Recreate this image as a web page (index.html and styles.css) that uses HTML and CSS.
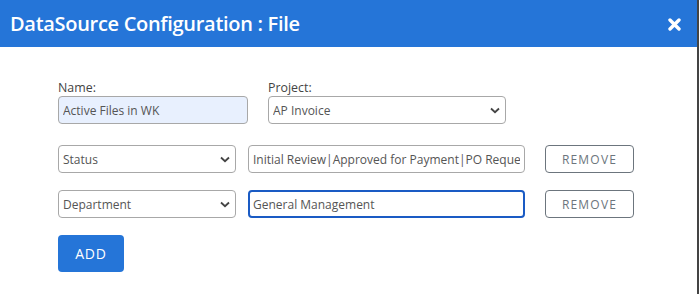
FILE: index.html
```html
<!DOCTYPE html>
<html lang="en">
<head>
    <meta charset="UTF-8">
    <title>DataSource Configuration</title>
    <link rel="stylesheet" href="styles.css">
</head>
<body>
    <div class="dialog">
        <div class="dialog-header">
            <h2>DataSource Configuration : File</h2>
            <span class="close">
                <svg width="13" height="13" viewBox="0 0 13 13"><path d="M2 2 L11 11 M11 2 L2 11" stroke="#fff" stroke-width="3.4" stroke-linecap="round"/></svg>
            </span>
        </div>
        <div class="dialog-body">
            <div class="top-row">
                <div class="field name-field">
                    <label for="dsName">Name:</label>
                    <input type="text" id="dsName" class="autofill" value="Active Files in WK">
                </div>
                <div class="field project-field">
                    <label for="dsProject">Project:</label>
                    <select id="dsProject"><option>AP Invoice</option></select>
                </div>
            </div>
            <div class="filter-row">
                <select><option>Status</option></select>
                <input type="text" value="Initial Review|Approved for Payment|PO Request">
                <button class="btn-remove">REMOVE</button>
            </div>
            <div class="filter-row">
                <select><option>Department</option></select>
                <input type="text" class="focused" value="General Management">
                <button class="btn-remove">REMOVE</button>
            </div>
            <button class="btn-add">ADD</button>
        </div>
    </div>
</body>
</html>
```

FILE: styles.css
```css
body {
    margin: 0;
    background: #444;
    font-family: 'Open Sans', sans-serif;
}

.dialog {
    width: 697px;
    height: 294px;
    background: #fff;
}

.dialog-header {
    height: 47px;
    background: #2575d8;
    display: flex;
    align-items: center;
    justify-content: space-between;
    padding: 0 16px 0 10px;
}

.dialog-header h2 {
    margin: 0;
    color: #fff;
    font-size: 20px;
    font-weight: 600;
    letter-spacing: -0.3px;
}

.close {
    display: flex;
    margin-top: 1px;
}

.dialog-body {
    padding: 33px 0 0 58px;
}

.top-row {
    display: flex;
    gap: 20px;
    margin-bottom: 21px;
}

.field label {
    display: block;
    font-size: 12.4px;
    line-height: 16px;
    color: #444;
}

input, select {
    box-sizing: border-box;
    height: 28px;
    border: 1px solid #a8a8a8;
    border-radius: 4px;
    font-family: 'Open Sans', sans-serif;
    font-size: 12px;
    color: #555;
    padding: 0 4px;
    background: #fff;
    outline: none;
}

select {
    appearance: none;
    background-image: url("data:image/svg+xml,%3Csvg xmlns='http://www.w3.org/2000/svg' width='10' height='7' viewBox='0 0 10 7'%3E%3Cpath d='M1 1.5 L5 5.2 L9 1.5' fill='none' stroke='%23444' stroke-width='1.8'/%3E%3C/svg%3E");
    background-repeat: no-repeat;
    background-position: right 5px center;
}

.name-field input {
    width: 190px;
}

.autofill {
    background: #e8f0fe;
}

.project-field select {
    width: 238px;
}

.filter-row {
    display: flex;
    align-items: center;
    margin-bottom: 17px;
}

.filter-row select {
    width: 178px;
    margin-right: 12px;
}

.filter-row input {
    width: 277px;
    margin-right: 20px;
}

.filter-row input.focused {
    border: 2px solid #1a5bc4;
    padding: 0 3px;
}

.btn-remove {
    width: 89px;
    height: 28px;
    background: #fff;
    border: 1px solid #6c757d;
    border-radius: 4px;
    color: #6c757d;
    font-family: 'Open Sans', sans-serif;
    font-size: 12px;
    letter-spacing: 1.2px;
    padding: 0;
}

.btn-add {
    width: 66px;
    height: 37px;
    background: #2575d8;
    border: none;
    border-radius: 4px;
    color: #fff;
    font-family: 'Open Sans', sans-serif;
    font-size: 14px;
    letter-spacing: 0.8px;
    padding: 0;
}
```
